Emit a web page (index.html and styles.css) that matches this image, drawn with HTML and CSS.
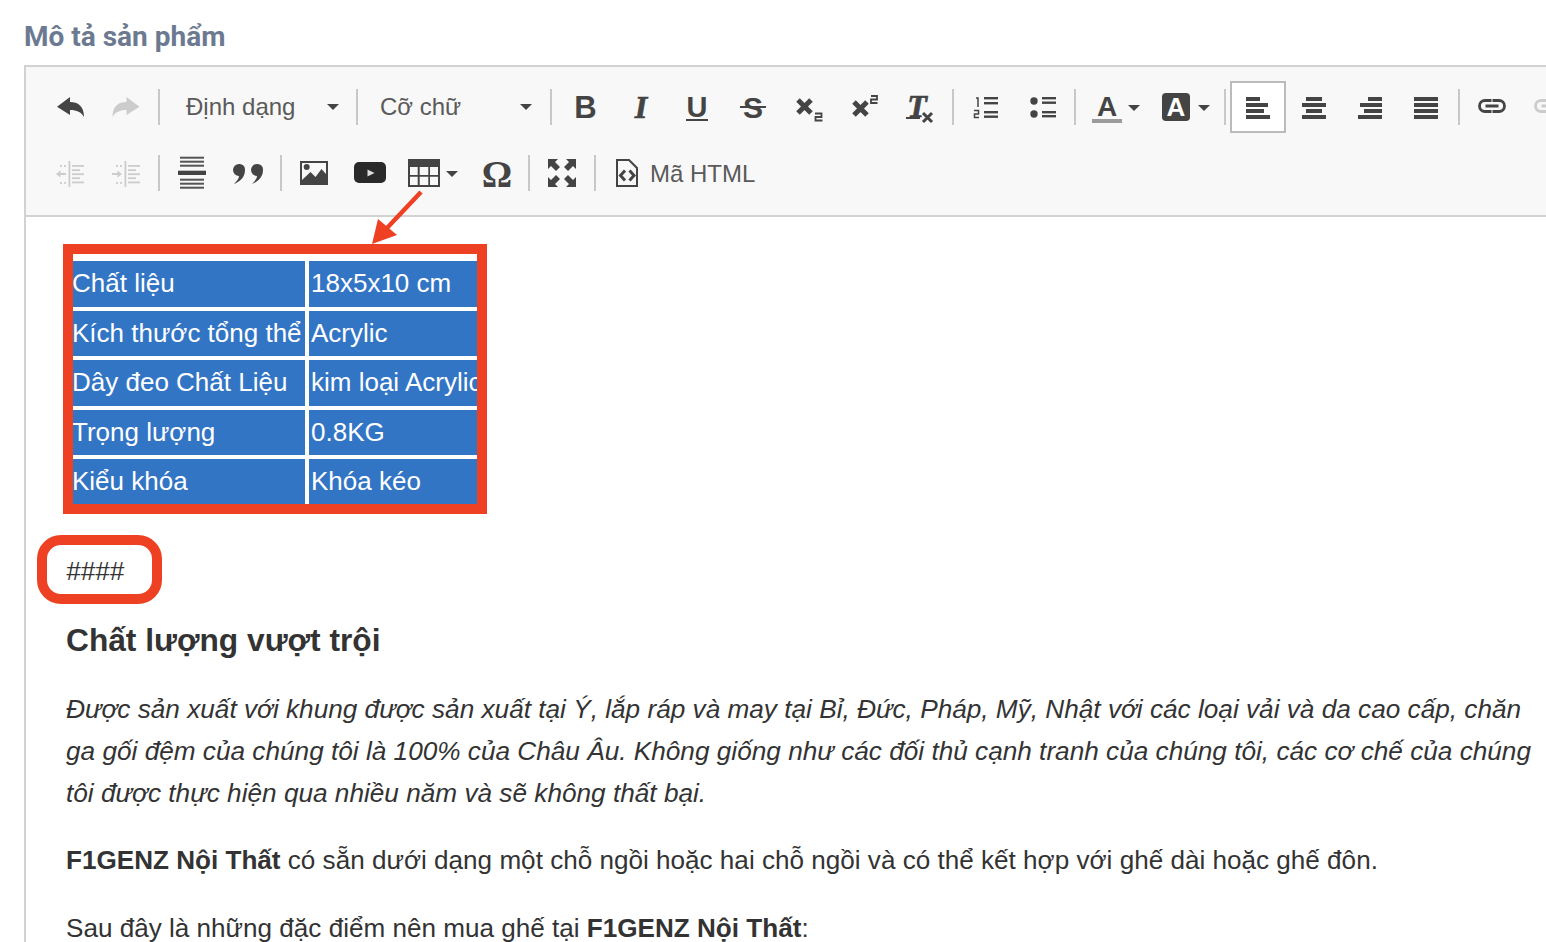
FILE: index.html
```html
<!DOCTYPE html>
<html lang="vi">
<head>
<meta charset="utf-8">
<title>Mô tả sản phẩm</title>
<link rel="stylesheet" href="styles.css">
</head>
<body>
<h2 class="title">Mô tả sản phẩm</h2>
<div class="editor">
  <div class="toolbar">
    <div class="row">
      <div class="btn"><svg class="ico" viewBox="0 0 56 52"><path d="M15 25.700 28 16v5c8 0 14 4 14 15-3-5-7-7-14-7v5z"/></svg></div>
      <div class="btn"><svg class="ico off" viewBox="0 0 56 52"><path d="M41.500 25.700 28.500 16v5c-8 0-14 4-14 15 3-5 7-7 14-7v5z"/></svg></div>
      <span class="sep"></span>
      <div class="drop drop-format"><span>Định dạng</span><i class="caret"></i></div>
      <span class="sep"></span>
      <div class="drop drop-size"><span>Cỡ chữ</span><i class="caret"></i></div>
      <span class="sep"></span>
      <div class="btn"><svg class="ico" viewBox="0 0 56 52"><text class="g-sans" x="29.500" y="37" font-size="31" text-anchor="middle">B</text></svg></div>
      <div class="btn"><svg class="ico" viewBox="0 0 56 52"><text class="g-serif" x="29" y="36.500" font-size="32" text-anchor="middle">I</text></svg></div>
      <div class="btn"><svg class="ico" viewBox="0 0 56 52"><text class="g-sans" x="29" y="36" font-size="29" text-anchor="middle">U</text><rect x="18" y="38" width="22" height="2"/></svg></div>
      <div class="btn"><svg class="ico" viewBox="0 0 56 52"><text class="g-sans" x="29" y="36.500" font-size="30" text-anchor="middle">S</text><rect x="16" y="25" width="26" height="2"/></svg></div>
      <div class="btn"><svg class="ico" viewBox="0 0 56 52"><path class="x" d="M18 19 31 32M31 19 18 32"/><path class="thin" d="M35 32.500h6.500v3.500H35.500v3.500h7"/></svg></div>
      <div class="btn"><svg class="ico" viewBox="0 0 56 52"><path class="x" d="M18 21 31 34M31 21 18 34"/><path class="thin" d="M35 15h6v3.500h-6V22h6.500"/></svg></div>
      <div class="btn"><svg class="ico" viewBox="0 0 56 52"><text class="g-serif" x="25" y="36" font-size="32" text-anchor="middle">T</text><rect x="14" y="36" width="14" height="2"/><path class="x3" d="M31 32 40 41M40 32 31 41"/></svg></div>
      <span class="sep"></span>
      <div class="btn"><svg class="ico" viewBox="0 0 56 52"><rect x="26" y="16" width="14" height="2.400"/><rect x="26" y="21" width="14" height="2.400"/><rect x="26" y="30" width="14" height="2.400"/><rect x="26" y="34.500" width="14" height="2.400"/><path class="thin1" d="M18 17h2v9M16 29.500h4.500v3.500H16.500v3.500h4.500"/></svg></div>
      <div class="btn"><svg class="ico" viewBox="0 0 56 52"><circle cx="20" cy="20" r="3.700"/><circle cx="20" cy="33" r="3.700"/><rect x="28" y="16" width="14" height="2.400"/><rect x="28" y="20.500" width="14" height="2.400"/><rect x="28" y="30" width="14" height="2.400"/><rect x="28" y="34" width="14" height="2.400"/></svg></div>
      <span class="sep"></span>
      <div class="btn btn-wide"><svg class="ico" viewBox="0 0 70 52"><text class="g-sans" x="27" y="35" font-size="28" text-anchor="middle">A</text><rect class="bar" x="12" y="38" width="30" height="4"/><path d="M48 24h12l-6 6z"/></svg></div>
      <div class="btn btn-wide"><svg class="ico" viewBox="0 0 70 52"><rect x="12" y="12" width="28" height="28" rx="4"/><text class="g-sans g-white" x="26" y="35" font-size="26" text-anchor="middle">A</text><path d="M48 24h12l-6 6z"/></svg></div>
      <span class="sep"></span>
      <div class="btn btn-active"><svg class="ico" viewBox="0 0 56 52"><rect x="16" y="16" width="14" height="4"/><rect x="16" y="22" width="22" height="4"/><rect x="16" y="28" width="18" height="4"/><rect x="16" y="34" width="24" height="4"/></svg></div>
      <div class="btn"><svg class="ico" viewBox="0 0 56 52"><rect x="20" y="16" width="16" height="4"/><rect x="16" y="22" width="24" height="4"/><rect x="20" y="28" width="16" height="4"/><rect x="16" y="34" width="24" height="4"/></svg></div>
      <div class="btn"><svg class="ico" viewBox="0 0 56 52"><rect x="26" y="16" width="14" height="4"/><rect x="18" y="22" width="22" height="4"/><rect x="22" y="28" width="18" height="4"/><rect x="16" y="34" width="24" height="4"/></svg></div>
      <div class="btn"><svg class="ico" viewBox="0 0 56 52"><rect x="16" y="16" width="24" height="4"/><rect x="16" y="22" width="24" height="4"/><rect x="16" y="28" width="24" height="4"/><rect x="16" y="34" width="24" height="4"/></svg></div>
      <span class="sep"></span>
      <div class="btn"><svg class="ico" viewBox="0 0 56 52"><path class="link" d="M27.500 19.500h-6.500a5.500 5.500 0 0 0 0 11h6.500M28.500 19.500h6.500a5.500 5.500 0 0 1 0 11h-6.500M21.500 25h13"/></svg></div>
      <div class="btn"><svg class="ico off" viewBox="0 0 56 52"><path class="link" d="M27.500 19.500h-6.500a5.500 5.500 0 0 0 0 11h6.500M28.500 19.500h6.500a5.500 5.500 0 0 1 0 11h-6.500M21.500 25h13"/></svg></div>
    </div>
    <div class="row row-second">
      <div class="btn"><svg class="ico off" viewBox="0 0 56 52"><path d="M14 27l4.500-3.500v2.500H24v2h-5.500v2.500z"/><rect x="26.500" y="14" width="1.800" height="26"/><rect x="30" y="18" width="12" height="1.800"/><rect x="30" y="22.300" width="8" height="1.800"/><rect x="30" y="26.300" width="12" height="1.800"/><rect x="30" y="30.300" width="8" height="1.800"/><rect x="30" y="34.500" width="12" height="1.800"/><rect x="18" y="18" width="2" height="1.800"/><rect x="22" y="18" width="2" height="1.800"/><rect x="18" y="35" width="2" height="1.800"/><rect x="22" y="35" width="2" height="1.800"/></svg></div>
      <div class="btn"><svg class="ico off" viewBox="0 0 56 52"><path d="M24 27l-4.500-3.500v2.500H14v2h5.500v2.500z"/><rect x="26.500" y="14" width="1.800" height="26"/><rect x="30" y="18" width="12" height="1.800"/><rect x="30" y="22.300" width="8" height="1.800"/><rect x="30" y="26.300" width="12" height="1.800"/><rect x="30" y="30.300" width="8" height="1.800"/><rect x="30" y="34.500" width="12" height="1.800"/><rect x="18" y="18" width="2" height="1.800"/><rect x="22" y="18" width="2" height="1.800"/><rect x="18" y="35" width="2" height="1.800"/><rect x="22" y="35" width="2" height="1.800"/></svg></div>
      <span class="sep"></span>
      <div class="btn"><svg class="ico" viewBox="0 0 56 52"><g class="hr-thin"><rect x="16" y="9.700" width="24" height="2"/><rect x="16" y="13.700" width="24" height="2"/><rect x="16" y="17.700" width="24" height="2"/><rect x="16" y="31.700" width="24" height="2"/><rect x="16" y="35.700" width="24" height="2"/><rect x="16" y="39.700" width="24" height="2"/></g><rect x="14" y="23.700" width="28" height="4.300"/></svg></div>
      <div class="btn"><svg class="ico" viewBox="0 0 56 52"><path d="M19 17a5.500 5.500 0 0 1 6 6c0 8-6 12-11 14 3-3 5-5.500 5-8a6 6 0 0 1 0-12zM37 17a5.500 5.500 0 0 1 6 6c0 8-6 12-11 14 3-3 5-5.500 5-8a6 6 0 0 1 0-12z"/></svg></div>
      <span class="sep"></span>
      <div class="btn"><svg class="ico" viewBox="0 0 56 52"><path fill-rule="evenodd" d="M14 14h28v24H14zM16 16v17l8.500-8 5 5 6-8 4.500 5V16z"/><circle cx="20.700" cy="20" r="3"/></svg></div>
      <div class="btn"><svg class="ico" viewBox="0 0 56 52"><rect class="dark" x="12" y="15" width="32" height="21" rx="5"/><path class="white" d="M25.500 22.500v7l7-3.500z"/></svg></div>
      <div class="btn btn-wide"><svg class="ico" viewBox="0 0 70 52"><path fill-rule="evenodd" d="M10 12h32v28H10zM12 20v8h7.700v-8zM21.700 20v8h8.600v-8zM32 20v8h8v-8zM12 29.700v8.300h7.700v-8.300zM21.700 29.700v8.300h8.600v-8.300zM32 29.700v8.300h8v-8.300z"/><path d="M48 24h12l-6 6z"/></svg></div>
      <div class="btn"><svg class="ico" viewBox="0 0 56 52"><text class="g-serif-up" x="29" y="40" font-size="38" text-anchor="middle">Ω</text></svg></div>
      <span class="sep"></span>
      <div class="btn"><svg class="ico" viewBox="0 0 56 52"><path d="M14 12h10l-3 3 5 5-4 4-5-5-3 3zM42 12H32l3 3-5 5 4 4 5-5 3 3zM14 40h10l-3-3 5-5-4-4-5 5-3-3zM42 40H32l3-3-5-5 4-4 5 5 3-3z"/></svg></div>
      <span class="sep"></span>
      <div class="html-btn"><svg class="ico-html" viewBox="0 0 46 52"><path class="doc" d="M17 13h12l8 8v18H17z"/><path class="doc-code" d="M25 23.500l-4.500 5 4.500 5M29.500 23.500l4.500 5-4.500 5"/></svg><span class="html-label">Mã HTML</span></div>
    </div>
  </div>
  <div class="content">
    <div class="mark-table">
      <table class="spec">
        <tr><td>Chất liệu</td><td>18x5x10 cm</td></tr>
        <tr><td>Kích thước tổng thể</td><td>Acrylic</td></tr>
        <tr><td>Dây đeo Chất Liệu</td><td>kim loại Acrylic</td></tr>
        <tr><td>Trọng lượng</td><td>0.8KG</td></tr>
        <tr><td>Kiểu khóa</td><td>Khóa kéo</td></tr>
      </table>
    </div>
    <div class="mark-hash"><em>####</em></div>
    <h3 class="heading">Chất lượng vượt trội</h3>
    <p class="lead">Được sản xuất với khung được sản xuất tại Ý, lắp ráp và may tại Bỉ, Đức, Pháp, Mỹ, Nhật với các loại vải và da cao cấp, chăn ga gối đệm của chúng tôi là 100% của Châu Âu. Không giống như các đối thủ cạnh tranh của chúng tôi, các cơ chế của chúng tôi được thực hiện qua nhiều năm và sẽ không thất bại.</p>
    <p class="para"><strong>F1GENZ Nội Thất</strong> có sẵn dưới dạng một chỗ ngồi hoặc hai chỗ ngồi và có thể kết hợp với ghế dài hoặc ghế đôn.</p>
    <p class="para">Sau đây là những đặc điểm nên mua ghế tại <strong>F1GENZ Nội Thất</strong>:</p>
  </div>
</div>
<svg class="arrow" viewBox="0 0 60 60"><path class="arrow-line" d="M51 2 17 38"/><path class="arrow-head" d="M2 54 8 29 27 45z"/></svg>
</body>
</html>
```
FILE: styles.css
```css
* { box-sizing: border-box; }
html, body { margin: 0; height: 100%; overflow: hidden; background: #fff; }
body { position: relative; font-family: "Liberation Sans", Arial, sans-serif; color: #333; }

.title {
  margin: 0;
  padding: 22px 0 13px 24px;
  font: 700 28px/30px Roboto, sans-serif;
  color: #6c7a91;
}

.editor {
  margin-left: 24px;
  width: 1600px;
  border-top: 2px solid #d2d2d2;
  border-left: 2px solid #d2d2d2;
}

.toolbar {
  padding: 14px 0 16px 16px;
  background: #f8f8f8;
  border-bottom: 2px solid #d2d2d2;
}
.row { display: flex; align-items: center; height: 52px; }
.row-second { margin-top: 14px; }

.btn { flex: none; width: 56px; height: 52px; }
.btn-wide { width: 70px; }
.btn-active { background: #fff; box-shadow: inset 0 0 0 2px #bbb; }
.sep { flex: none; width: 2px; height: 36px; margin: 0 4px; background: #c8c8c8; }

.ico { display: block; width: 100%; height: 100%; fill: #444; }
.ico.off { fill: #ccc; }
.ico.off .link { stroke: #ccc; }
.g-sans { font-family: "Liberation Sans", sans-serif; font-weight: 700; }
.g-serif { font-family: "Liberation Serif", serif; font-weight: 700; font-style: italic; stroke: #444; stroke-width: 0.700; }
.g-serif-up { font-family: "Liberation Serif", serif; font-weight: 700; }
.g-white { fill: #fff; }
.bar { fill: #9c9c9c; }
.hr-thin { fill: #555; }
.x { fill: none; stroke: #444; stroke-width: 5; }
.x3 { fill: none; stroke: #444; stroke-width: 3; }
.thin { fill: none; stroke: #444; stroke-width: 1.800; }
.thin1 { fill: none; stroke: #444; stroke-width: 1.500; }
.link { fill: none; stroke: #444; stroke-width: 2.800; }
.dark { fill: #2a2a2a; }
.white { fill: #ddd; }

.drop {
  flex: none;
  display: flex;
  align-items: center;
  justify-content: space-between;
  height: 52px;
  font-size: 24px;
  color: #5a5a5a;
}
.drop-format { width: 188px; padding: 0 13px 0 22px; }
.drop-size { width: 184px; padding: 0 14px 0 18px; }
.caret {
  width: 0;
  height: 0;
  border-top: 6px solid #444;
  border-left: 6.500px solid transparent;
  border-right: 6.500px solid transparent;
}

.html-btn { display: flex; align-items: center; height: 52px; font-size: 24px; color: #5a5a5a; }
.html-label { padding-top: 2px; }
.ico-html { display: block; width: 46px; height: 52px; margin-right: 4px; }
.doc { fill: none; stroke: #444; stroke-width: 2; }
.doc-code { fill: none; stroke: #444; stroke-width: 3; }

.content { padding: 27px 0 0 40px; height: 800px; }

.mark-table {
  width: 424px;
  height: 270px;
  margin-left: -3px;
  border: 10px solid #ee4023;
  overflow: hidden;
  padding-top: 7px;
}
.spec {
  width: 404px;
  table-layout: fixed;
  border-collapse: separate;
  border-spacing: 0;
  font-size: 26px;
  color: #fff;
}
.spec td {
  background: #3375c5;
  height: 50px;
  padding: 0;
  white-space: nowrap;
  overflow: hidden;
  border-bottom: 4px solid #fff;
}
.spec tr:nth-child(even) td { height: 49px; }
.spec tr:nth-child(odd) td { padding-bottom: 2px; }
.spec tr:last-child td { height: 45px; border-bottom: 0; padding-bottom: 0; }
.spec td:first-child { width: 236px; border-right: 4px solid #fff; text-indent: -1px; }
.spec td:last-child { padding-left: 2px; }

.mark-hash {
  width: 125px;
  height: 69px;
  margin: 21px 0 0 -29px;
  padding-left: 19px;
  border: 10px solid #ee4023;
  border-radius: 24px;
  font-size: 26px;
  line-height: 53px;
}

.heading { margin: 15px 0 0; font: 700 31.700px/42px "Liberation Sans", sans-serif; color: #333; }
.lead, .para { margin: 25px 0 0; font-size: 26.100px; line-height: 42px; width: 1475px; }
.para + .para { margin-top: 26px; }
.lead { margin-top: 27px; font-size: 26.200px; font-style: italic; }

.arrow { position: absolute; left: 370px; top: 190px; width: 60px; height: 60px; overflow: visible; }
.arrow-line { fill: none; stroke: #ee4023; stroke-width: 4.500; }
.arrow-head { fill: #ee4023; }
```
